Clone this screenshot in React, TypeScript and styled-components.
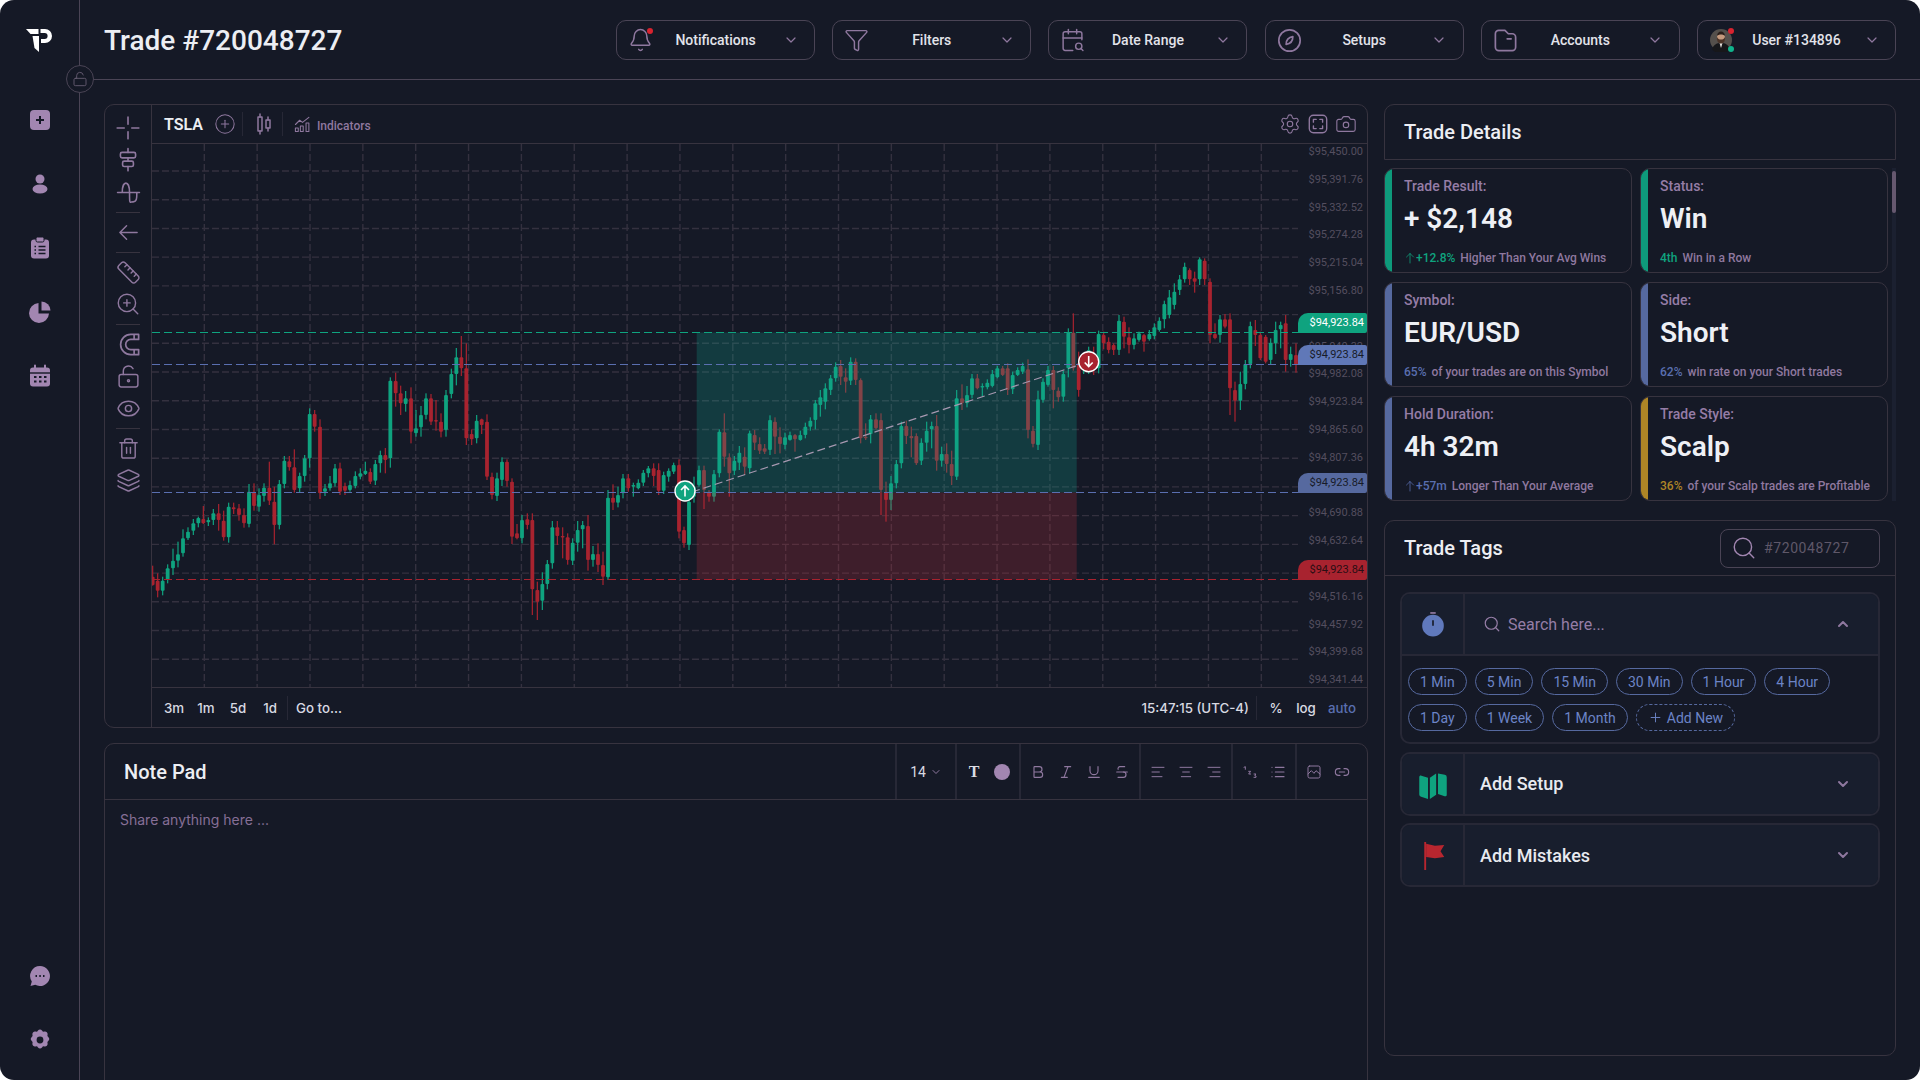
import React from 'react';
import styled, { createGlobalStyle } from 'styled-components';
import {
  Bell, Bold, Camera, CalendarSearch, ChevronDown, ChevronUp, CirclePlus, Eye, Funnel, Italic, Layers,
  Link2, List, LockKeyholeOpen, LockOpen, Plus, Ruler, Search, Settings, Strikethrough, Trash2, Underline, ZoomIn,
} from 'lucide-react';

const bg = '#151926';
const line = '#37333f';
const strong = '#4a4455';
const inner = '#272836';
const purple = '#8f789f';
const fillPurple = '#a286b1';
const green = '#0fa37f';
const blue = '#5a6fb0';
const red = '#a8232f';
const gold = '#ae8526';

const GlobalStyle = createGlobalStyle`
  html, body { margin: 0; padding: 0; background: #fff; }
  body { width: 1920px; height: 1080px; overflow: hidden; font-family: Roboto, "Liberation Sans", sans-serif; }
  * { box-sizing: border-box; }
`;

const Shell = styled.div`
  width: 1920px;
  height: 1080px;
  display: flex;
  background: ${bg};
  border-radius: 14px;
  overflow: hidden;
  color: #eceef3;
`;

const Sidebar = styled.aside`
  width: 80px;
  flex: none;
  display: flex;
  flex-direction: column;
  border-right: 1px solid ${strong};
  padding-bottom: 8px;
`;

const LogoCell = styled.div`
  height: 88px;
  display: flex;
  align-items: flex-start;
  justify-content: center;
  padding: 28px 2px 0 0;
`;

const NavItem = styled.div`
  height: 64px;
  display: flex;
  align-items: center;
  justify-content: center;
  color: ${fillPurple};
`;

const NavBottom = styled.div`
  margin-top: auto;
`;

const Content = styled.div`
  flex: 1;
  min-width: 0;
  display: flex;
  flex-direction: column;
`;

const Header = styled.header`
  position: relative;
  height: 80px;
  flex: none;
  display: flex;
  align-items: center;
  justify-content: space-between;
  padding: 1px 24px 0 24px;
  border-bottom: 1px solid ${strong};
`;

const LockBadge = styled.div`
  position: absolute;
  left: -14px;
  bottom: -14px;
  width: 28px;
  height: 28px;
  border-radius: 50%;
  background: ${bg};
  border: 1px solid ${strong};
  display: flex;
  align-items: center;
  justify-content: center;
  color: #6b6076;
`;

const Title = styled.h1`
  margin: 0;
  font-size: 28px;
  font-weight: 500;
  color: #eceef3;
`;

const Dropdowns = styled.div`
  display: flex;
  gap: 17.2px;
`;

const Dropdown = styled.div`
  width: 199px;
  height: 40px;
  border: 1px solid ${strong};
  border-radius: 10px;
  padding: 0 11px;
  display: grid;
  grid-template-columns: 25px 1fr 25px;
  align-items: center;
  font-size: 14px;
  font-weight: 500;
  color: #e2e3ea;
`;

const DropLabel = styled.span`
  text-align: center;
`;

const DropIcon = styled.span`
  position: relative;
  display: flex;
  justify-content: center;
  color: ${purple};
`;

const Dot = styled.i<{ $c: string; $top: number }>`
  position: absolute;
  right: 0;
  top: ${p => p.$top}px;
  width: 6px;
  height: 6px;
  border-radius: 50%;
  background: ${p => p.$c};
`;

const DropChevron = styled.span`
  display: flex;
  justify-content: center;
  color: ${purple};
`;

const Main = styled.main`
  flex: 1;
  min-height: 0;
  display: grid;
  grid-template-columns: 1264px 512px;
  gap: 16px;
  padding: 24px 24px 0;
  overflow: hidden;
`;

const LeftCol = styled.div`
  display: flex;
  flex-direction: column;
  gap: 15px;
`;

const ChartPanel = styled.section`
  height: 624px;
  flex: none;
  display: flex;
  border: 1px solid ${line};
  border-radius: 10px;
`;

const ToolRail = styled.div`
  width: 47px;
  flex: none;
  border-right: 1px solid ${line};
  padding-top: 7px;
  display: flex;
  flex-direction: column;
  align-items: center;
`;

const ToolIcon = styled.div`
  height: 32px;
  display: flex;
  align-items: center;
  color: ${purple};
`;

const ToolSep = styled.div`
  width: 24px;
  height: 1px;
  margin: 3.5px 0;
  background: ${line};
`;

const ChartCol = styled.div`
  flex: 1;
  min-width: 0;
  display: flex;
  flex-direction: column;
`;

const ChartTop = styled.div`
  height: 39px;
  flex: none;
  display: flex;
  align-items: center;
  padding: 0 10px 0 12px;
  border-bottom: 1px solid ${line};
  color: ${purple};
`;

const Symbol = styled.span`
  font-size: 16px;
  font-weight: 600;
  color: #eceef3;
  margin-right: 11px;
`;

const VSep = styled.span<{ $l?: number; $r?: number }>`
  width: 1px;
  height: 24px;
  background: ${inner};
  margin-left: ${p => p.$l ?? 8}px;
  margin-right: ${p => p.$r ?? 8}px;
`;

const Indicators = styled.span`
  font-size: 12px;
  font-weight: 500;
  margin: 3px 0 0 6px;
  color: ${purple};
`;

const TopRight = styled.div`
  margin-left: auto;
  display: flex;
  gap: 6px;
`;

const PlotRow = styled.div`
  flex: 1;
  min-height: 0;
  display: flex;
`;

const Plot = styled.svg`
  width: 1146px;
  height: 543px;
  flex: none;
  display: block;
`;

const Axis = styled.div`
  position: relative;
  flex: 1;
  display: flex;
  flex-direction: column;
  gap: 11.8px;
  overflow: hidden;
`;

const AxisLabel = styled.span`
  height: 16px;
  line-height: 16px;
  flex: none;
  text-align: right;
  padding-right: 4px;
  font-size: 11px;
  color: #544e5f;
`;

const PriceTag = styled.span<{ $top: number; $bg: string; $fg: string }>`
  position: absolute;
  left: 0;
  right: 0;
  top: ${p => p.$top}px;
  height: 20px;
  line-height: 20px;
  text-align: right;
  padding-right: 3px;
  font-size: 11px;
  background: ${p => p.$bg};
  color: ${p => p.$fg};
  border-radius: 10px 2px 2px 0;
`;

const ChartBottom = styled.div`
  height: 40px;
  flex: none;
  display: flex;
  align-items: center;
  padding: 1px 7px 0 6px;
  border-top: 1px solid ${line};
  font-family: Inter, Roboto, sans-serif;
  font-size: 13.3px;
  font-weight: 500;
  color: #d8d9e2;
`;

const RangeBtn = styled.span`
  width: 32px;
  text-align: center;
`;

const GoTo = styled.span`
  margin-left: 8px;
`;

const BarRight = styled.div`
  margin-left: auto;
  display: flex;
  align-items: center;
`;

const Scale = styled.span<{ $active?: boolean; $w: number }>`
  width: ${p => p.$w}px;
  text-align: center;
  color: ${p => (p.$active ? blue : '#d8d9e2')};
`;

const NotePanel = styled.section`
  height: 400px;
  flex: none;
  border: 1px solid ${line};
  border-radius: 10px;
`;

const NoteHead = styled.div`
  height: 56px;
  display: flex;
  align-items: stretch;
  border-bottom: 1px solid ${line};
  padding-right: 8px;
`;

const NoteTitle = styled.h2`
  margin: 0 auto 0 0;
  padding-left: 19px;
  align-self: center;
  font-size: 20px;
  font-weight: 500;
`;

const EdGroup = styled.div<{ $w?: number }>`
  ${p => (p.$w ? `width: ${p.$w}px; justify-content: center;` : '')}
  display: flex;
  align-items: center;
  gap: 12px;
  padding: 0 9px;
  border-left: 2px solid ${inner};
  color: ${purple};
  font-size: 14px;
`;

const SizeValue = styled.span`
  color: #d8d9e2;
  margin-right: -8px;
`;

const Swatch = styled.span`
  width: 16px;
  height: 16px;
  border-radius: 50%;
  background: ${fillPurple};
`;

const TextT = styled.span`
  width: 16px;
  text-align: center;
  font-family: "Liberation Serif", serif;
  font-weight: 700;
  font-size: 16px;
  color: #dcdde4;
`;

const Placeholder = styled.div`
  padding: 10px 15px;
  font-family: Inter, sans-serif;
  font-size: 14px;
  line-height: 20px;
  color: #866f96;
`;

const RightCol = styled.div`
  display: flex;
  flex-direction: column;
`;

const DetailsHead = styled.div`
  height: 56px;
  flex: none;
  display: flex;
  align-items: center;
  padding-left: 19px;
  border: 1px solid ${line};
  border-radius: 10px 10px 0 0;
  font-size: 20px;
  font-weight: 500;
`;

const CardsWrap = styled.div`
  margin-top: 8px;
  display: flex;
  gap: 4px;
`;

const CardGrid = styled.div`
  display: grid;
  grid-template-columns: 248px 248px;
  grid-auto-rows: 105px;
  gap: 9px 8px;
`;

const ScrollTrack = styled.div`
  width: 4px;
  background: #1b2030;
`;

const ScrollThumb = styled.div`
  width: 3.5px;
  height: 42px;
  margin-top: 3px;
  border-radius: 2px;
  background: #66586f;
`;

const Card = styled.div<{ $c: string }>`
  position: relative;
  overflow: hidden;
  border: 1px solid ${line};
  border-radius: 10px;
  padding: 8px 0 0 19px;

  &::before {
    content: '';
    position: absolute;
    left: 0;
    top: 0;
    bottom: 0;
    width: 7px;
    background: ${p => p.$c};
  }
`;

const CardLabel = styled.div`
  font-size: 14px;
  font-weight: 500;
  line-height: 18px;
  color: #957da6;
`;

const CardValue = styled.div`
  margin-top: 6px;
  font-size: 28px;
  font-weight: 600;
  line-height: 36px;
  color: #eef0f5;
`;

const CardSub = styled.div`
  margin-top: 13px;
  font-size: 12px;
  font-weight: 500;
  line-height: 16px;
  color: #8f789f;
  display: flex;
  align-items: center;
  gap: 5px;
  white-space: nowrap;
`;

const Delta = styled.span<{ $c: string }>`
  display: inline-flex;
  align-items: center;
  color: ${p => p.$c};
`;

const TagsPanel = styled.section`
  margin-top: 19px;
  height: 536px;
  flex: none;
  border: 1px solid ${line};
  border-radius: 10px;
`;

const TagsHead = styled.div`
  height: 55px;
  display: flex;
  align-items: center;
  justify-content: space-between;
  padding: 0 15px 0 19px;
  border-bottom: 1px solid ${line};
  font-size: 20px;
  font-weight: 500;
`;

const TagSearch = styled.div`
  width: 160px;
  height: 39px;
  border: 1px solid ${strong};
  border-radius: 8px;
  padding-left: 10px;
  display: flex;
  align-items: center;
  gap: 7px;
  color: ${fillPurple};
  font-size: 14px;
  font-weight: 400;
`;

const TagId = styled.span`
  color: #5f5869;
  letter-spacing: 0.6px;
`;

const TagsBody = styled.div`
  padding: 16px 15px;
  display: flex;
  flex-direction: column;
  gap: 7.5px;
`;

const Accordion = styled.div`
  border: 2px solid ${inner};
  border-radius: 10px;
  overflow: hidden;
`;

const AccHead = styled.div`
  height: 60px;
  display: flex;
  align-items: center;
  background: #181e2d;
`;

const AccIcon = styled.div`
  width: 63px;
  height: 100%;
  flex: none;
  display: flex;
  align-items: center;
  justify-content: center;
  border-right: 2px solid ${inner};
`;

const AccTitle = styled.span`
  margin-left: 15px;
  font-size: 18px;
  font-weight: 500;
  color: #e8eaf0;
`;

const AccSearch = styled.span`
  margin-left: 18px;
  display: flex;
  align-items: center;
  gap: 7px;
  font-size: 16px;
  color: #957da6;
`;

const AccChevron = styled.span`
  margin-left: auto;
  margin-right: 27px;
  display: flex;
  color: ${purple};
`;

const ChipWrap = styled.div`
  padding: 12px 6px 11px;
  display: flex;
  flex-wrap: wrap;
  gap: 9px 8px;
  border-top: 2px solid ${inner};
`;

const Chip = styled.span<{ $dashed?: boolean }>`
  height: 27px;
  padding: 0 11px;
  display: inline-flex;
  align-items: center;
  gap: 4px;
  font-size: 14px;
  color: #6c84c6;
  border: 1px ${p => (p.$dashed ? 'dashed' : 'solid')} #56699f;
  border-radius: 14px;
`;

const Icon = styled.svg.attrs({
  viewBox: '0 0 24 24',
  fill: 'none',
  stroke: 'currentColor',
  strokeWidth: 1.5,
  strokeLinecap: 'round',
  strokeLinejoin: 'round',
})<{ $s?: number }>`
  width: ${p => p.$s ?? 22}px;
  height: ${p => p.$s ?? 22}px;
  display: block;
  flex: none;
`;

const Solid = styled.svg.attrs({ viewBox: '0 0 24 24', fill: 'currentColor' })<{ $s?: number }>`
  width: ${p => p.$s ?? 24}px;
  height: ${p => p.$s ?? 24}px;
  display: block;
`;

const Logo = () => (
  <svg width="26" height="24" viewBox="0 0 26 24" fill="#fff">
    <path d="M0 1h12.5v5H4.5z" />
    <path d="M6.5 8H13v16l-4.500-4z" />
    <path d="M14.500 1H19a7 7 0 0 1 0 14h-4v-4h3.600a3 3 0 0 0 0-6h-4.100z" />
  </svg>
);

const Gear = () => (
  <Solid $s={24}>
    <path
      fillRule="evenodd"
      d="M10 2.500a2.600 2.600 0 0 1 4 0l1 1.200 1.600-.2a2.600 2.600 0 0 1 3 2.900l-.2 1.600 1.100 1.200a2.600 2.600 0 0 1 0 3.600l-1.100 1.200.2 1.600a2.600 2.600 0 0 1-3 2.900l-1.600-.2-1 1.200a2.600 2.600 0 0 1-4 0l-1-1.200-1.600.2a2.600 2.600 0 0 1-3-2.900l.2-1.600-1.100-1.200a2.600 2.600 0 0 1 0-3.600l1.100-1.200-.2-1.600a2.600 2.600 0 0 1 3-2.900l1.600.2zM12 8.600a3.400 3.400 0 1 0 0 6.800 3.400 3.400 0 0 0 0-6.800z"
    />
  </Solid>
);

const Avatar = () => (
  <svg width="24" height="24" viewBox="0 0 24 24">
    <circle cx="11" cy="12" r="11" fill="#55504c" />
    <path d="M2 21c2-5 5-6 9-6s7 1 9 6a11 11 0 0 1-18 0z" fill="#17171a" />
    <path d="M9.500 15l1.500 5 1.500-5z" fill="#e8e6e2" />
    <ellipse cx="11" cy="9.500" rx="4" ry="5" fill="#c69a7e" />
    <path d="M7 9c-.5 5 2 6.500 4 6.500s4.500-1.500 4-6.500c-1 2-2 2.500-4 2.500S8 11 7 9z" fill="#4a3328" />
    <path d="M7 8c0-3 2-4.500 4-4.500S15 5 15 8c-1.500-2-6.500-2-8 0z" fill="#2b1f1b" />
  </svg>
);

const A = `8 r 737 770 795 797;23 r 760 782 812 832;38 g 770 782 812 826;53 g 733 745 780 790;69 g 686 722 745 765;84 g 665 703 722 742;99 g 628 655 700 710;114 g 622 635 655 660;130 g 597 610 632 645;145 g 590 594 610 622;160 r 558 597 610 612;175 g 592 600 607 618;190 g 567 580 600 615;206 r 552 580 600 632;221 r 572 602 652 662;236 g 548 560 652 668;251 r 548 562 568 582;267 r 552 565 585 602;282 r 565 585 610 623;297 g 492 515 612 622;312 r 490 515 558 572;327 g 505 525 560 575;342 g 490 503 528 545;358 r 425 503 542 555;373 r 500 545 615 673;388 g 480 492 615 628;403 g 408 422 492 505;418 r 408 424 442 452;433 r 388 442 510 518;449 g 458 468 505 518;464 g 405 415 468 485;479 g 265 282 415 443;494 r 270 282 320 335;510 r 298 320 520 537;525 g 492 505 515 528;540 g 468 490 505 512;555 g 432 445 490 500;570 r 428 445 515 525;585 r 488 498 512 525;600 g 482 495 510 515;616 g 454 468 498 505;631 g 445 460 470 478;646 g 425 452 462 465;661 r 445 456 485 492;676 g 420 432 482 495;691 g 392 405 430 458;706 r 384 405 420 460;721 g 172 182 415 443;737 r 158 183 220 260;752 r 197 220 250 285;767 g 213 235 252 275;783 r 202 235 335 370;798 g 270 325 340 350;813 g 258 285 322 350;828 g 220 235 285 298;843 r 222 235 305 315;858 r 240 300 305 332;873 r 280 305 335 352;888 g 210 225 330 350;904 g 146 162 222 235;919 g 84 112 162 196;934 r 48 112 145 168;949 r 70 145 355 375;965 r 328 342 358 375;980 g 285 302 355 370;995 r 296 298 315 342;1011 r 283 305 470 480;1026 r 458 470 525 538;1041 g 458 475 528 543;1056 g 412 425 480 498;1071 r 418 425 483 500;1086 r 475 485 650 672;1101 r 612 640 655 658;1116 g 585 600 655 670;1132 r 580 598 615 628;1147 r 580 600 808 885;1162 r 785 810 845 900;1177 g 757 792 842 870;1192 g 720 732 792 808;1207 g 603 622 730 746;1222 r 603 622 648 675;1238 r 622 648 652 715;1253 r 640 652 720 734;1268 g 655 668 722 735;1283 g 603 630 668 695;1298 g 603 615 628 685;1314 r 585 618 720 752;1329 g 678 702 720 740;1344 r 670 702 735 756;1359 r 695 735 770 795;1374 g 510 533 772 780;1389 r 493 533 548 570;1404 g 500 525 548 562;1419 g 462 475 520 535;1435 r 462 475 505 515;1450 g 488 495 500 530;1465 g 478 488 505 508;1480 g 450 458 488 498;1495 g 438 445 460 472`;

const B = `41 r 490 505 528 558;56 r 490 510 572 585;71 g 515 525 572 582;86 g 505 512 530 545;101 g 488 495 515 522;117 r 478 495 695 715;132 r 680 690 730 743;147 g 590 605 735 750;162 g 530 560 590 608;177 g 497 510 555 560;192 r 497 510 570 627;207 r 570 575 590 605;222 g 510 522 590 605;238 g 388 395 520 532;253 r 340 397 470 500;268 r 460 472 520 590;283 g 468 482 512 525;298 g 438 458 488 510;314 r 442 470 500 525;329 g 392 400 505 520;344 r 390 405 428 450;359 r 412 432 452 462;374 r 432 445 455 462;390 g 346 360 450 465;405 r 352 365 410 462;420 r 382 410 432 460;435 g 398 412 435 448;450 g 395 405 420 422;465 r 402 405 418 455;481 g 392 405 420 422;496 g 368 380 405 415;511 g 352 362 380 392;526 g 300 310 360 388;541 g 270 292 315 350;556 g 250 265 305 328;572 g 225 235 270 285;587 g 187 200 235 245;602 r 180 198 230 255;617 r 205 232 245 278;632 g 172 185 242 255;647 r 175 185 240 255;662 r 235 240 415 430;677 r 370 410 415 420;692 g 345 358 402 430;708 r 340 358 385 388;723 r 340 360 570 645;738 r 545 575 600 665;753 g 528 550 600 630;769 g 480 492 550 565;784 g 365 378 490 505;799 r 362 378 408 432;814 r 380 408 415 472;829 r 400 408 490 495;844 g 415 428 482 495;860 g 365 392 428 455;875 g 365 378 388 445;890 r 345 378 482 512;905 g 440 462 482 500;920 r 430 462 492 518;935 r 452 492 528 555;950 g 270 295 530 540;966 r 253 295 310 330;981 g 258 285 310 322;996 g 222 235 285 295;1012 r 222 235 265 268;1027 g 250 258 262 290;1042 g 238 248 262 268;1057 g 210 222 258 262;1072 g 198 205 232 235;1088 r 198 205 225 228;1103 r 190 205 270 285;1118 g 215 225 268 282;1133 g 202 210 225 228;1148 g 188 198 215 222;1164 r 178 208 390 415;1179 r 378 392 432 442;1194 g 272 298 435 450;1209 g 235 245 300 308;1224 g 198 210 255 260;1240 r 198 210 270 325;1255 r 262 272 292 305;1270 g 212 222 290 305;1285 g 85 98 205 232;1300 r 40 98 205 212;1316 r 155 190 270 290;1331 g 195 200 205 222;1346 g 140 150 205 222;1361 r 140 195 205 225;1376 g 92 102 205 220;1391 r 95 105 130 148;1406 r 112 125 150 160;1421 r 130 135 150 165;1437 g 45 62 150 165;1452 r 50 65 110 145;1467 r 82 112 135 160;1482 g 100 115 135 148;1497 g 95 100 120 125`;

const C = `132 r 282 285 305 335;148 g 270 282 298 302;163 g 250 262 288 298;178 g 232 242 270 275;193 g 182 192 238 265;208 g 150 172 225 235;223 g 130 155 195 208;239 g 105 118 150 165;254 g 68 80 118 128;269 r 85 90 118 135;284 r 95 115 125 158;299 g 52 58 118 135;314 r 55 62 118 135;330 r 115 125 285 310;345 r 250 282 295 298;360 g 225 238 285 308;375 r 222 238 260 265;390 r 220 238 445 525;405 r 425 450 482 545;421 g 395 432 482 510;436 g 360 372 432 448;451 g 245 258 372 385;466 r 240 270 285 318;481 r 275 285 355 360;497 r 285 290 365 370;512 g 295 308 360 372;527 g 245 270 310 342;542 g 245 255 268 325;557 r 225 250 360 395;572 g 320 342 360 380;588 r 310 345 375 398`;

const parseCandles = (src: string, ox: number, oy: number) =>
  src.split(';').map(row => {
    const [x, side, hi, top, bot, lo] = row.split(' ');
    return {
      x: ox + Number(x) / 3,
      up: side === 'g',
      hi: oy + Number(hi) / 3,
      top: oy + Number(top) / 3,
      bot: oy + Number(bot) / 3,
      lo: oy + Number(lo) / 3,
    };
  });

const candles = [...parseCandles(A, 150, 320), ...parseCandles(B, 640, 300), ...parseCandles(C, 1100, 240)];

const gridY = Array.from({ length: 19 }, (_, i) => 171 + i * 28.72);
const gridX = Array.from({ length: 21 }, (_, i) => 204.3 + i * 52.85);

const Chart = () => (
  <Plot viewBox="152 144 1146 543">
    {gridY.map(y => (
      <line key={y} x1={152} x2={1298} y1={y} y2={y} stroke="#34313f" strokeWidth={1.4} strokeDasharray="7 3" />
    ))}
    {gridX.map(x => (
      <line key={x} x1={x} x2={x} y1={144} y2={687} stroke="#34313f" strokeWidth={1.4} strokeDasharray="7 3" />
    ))}
    {candles.map(c => (
      <g key={c.x} fill={c.up ? green : red}>
        <rect x={c.x - 0.6} y={c.hi} width={1.2} height={c.lo - c.hi} />
        <rect x={c.x - 1.9} y={c.top} width={3.8} height={Math.max(c.bot - c.top, 1.5)} rx={1} />
      </g>
    ))}
    <rect x={696.7} y={332.5} width={380} height={160} fill="rgba(17,165,142,.25)" />
    <rect x={696.7} y={492.5} width={380} height={87} fill="rgba(189,49,58,.25)" />
    <line x1={152} x2={1298} y1={332.5} y2={332.5} stroke={green} strokeDasharray="8 4" />
    <line x1={152} x2={1298} y1={364.5} y2={364.5} stroke={blue} strokeDasharray="8 4" />
    <line x1={152} x2={1298} y1={492.5} y2={492.5} stroke={blue} strokeDasharray="8 4" />
    <line x1={152} x2={1298} y1={579.5} y2={579.5} stroke={red} strokeDasharray="8 4" />
    <line x1={692} x2={1082} y1={492} y2={364} stroke="#a798b0" strokeWidth={1.2} strokeDasharray="8 4" />
    <circle cx={685} cy={491} r={10} fill={green} stroke="#fff" strokeWidth={1.4} />
    <path d="M685 496.500v-10M681 490l4-4 4 4" fill="none" stroke="#fff" strokeWidth={1.6} />
    <circle cx={1088.7} cy={361.7} r={10} fill={red} stroke="#fff" strokeWidth={1.4} />
    <path d="M1088.700 356v10.500M1084.700 362.500l4 4 4-4" fill="none" stroke="#fff" strokeWidth={1.6} />
  </Plot>
);

// rows covered by a price tag are left blank
const prices = [
  '95,450.00', '95,391.76', '95,332.52', '95,274.28', '95,215.04', '95,156.80', '', '95,040.32', '94,982.08',
  '94,923.84', '94,865.60', '94,807.36', '', '94,690.88', '94,632.64', '', '94,516.16', '94,457.92',
  '94,399.68', '94,341.44',
];

const dropdowns: { label: string; icon: React.ReactNode }[] = [
  { label: 'Notifications', icon: <><Bell size={26} strokeWidth={1.4} /><Dot $c="#d8232f" $top={1} /></> },
  { label: 'Filters', icon: <Funnel size={26} strokeWidth={1.4} /> },
  { label: 'Date Range', icon: <CalendarSearch size={26} strokeWidth={1.4} /> },
  {
    label: 'Setups',
    icon: (
      <Icon $s={27} strokeWidth={1.3}>
        <circle cx="12" cy="12" r="9.500" />
        <path d="M9 15.500c0-4.500 2-6.500 6-7 0 4.500-2 6.500-6 7z" />
      </Icon>
    ),
  },
  {
    label: 'Accounts',
    icon: (
      <Icon $s={27} strokeWidth={1.3}>
        <path d="M3 6a3 3 0 0 1 3-3h5.500l3 3H18a3 3 0 0 1 3 3v9a3 3 0 0 1-3 3H6a3 3 0 0 1-3-3z" />
        <path d="M13.500 10.500h3.500" />
      </Icon>
    ),
  },
  { label: 'User #134896', icon: <><Avatar /><Dot $c="#d8232f" $top={0} /><Dot $c="#10b48d" $top={18} /></> },
];

const statCards = [
  { label: 'Trade Result:', value: '+ $2,148', delta: '+12.8%', arrow: true, text: 'Higher Than Your Avg Wins', c: green, bar: '#0e9a7b' },
  { label: 'Status:', value: 'Win', delta: '4th', text: 'Win in a Row', c: green, bar: '#0e9a7b' },
  { label: 'Symbol:', value: 'EUR/USD', delta: '65%', text: 'of your trades are on this Symbol', c: blue, bar: '#56699f' },
  { label: 'Side:', value: 'Short', delta: '62%', text: 'win rate on your Short trades', c: blue, bar: '#56699f' },
  { label: 'Hold Duration:', value: '4h 32m', delta: '+57m', arrow: true, text: 'Longer Than Your Average', c: blue, bar: '#56699f' },
  { label: 'Trade Style:', value: 'Scalp', delta: '36%', text: 'of your Scalp trades are Profitable', c: gold, bar: gold },
];

const chips = ['1 Min', '5 Min', '15 Min', '30 Min', '1 Hour', '4 Hour', '1 Day', '1 Week', '1 Month'];

const AlignIcon = ({ lines }: { lines: string }) => (
  <Icon $s={16} strokeWidth={2}>
    <path d={lines} />
  </Icon>
);

const App: React.FC = () => (
  <>
    <GlobalStyle />
    <Shell>
      <Sidebar>
        <LogoCell><Logo /></LogoCell>
        <NavItem>
          <Solid $s={24}>
            <rect x="2" y="2" width="20" height="20" rx="4" />
            <path d="M12 8v8M8 12h8" stroke={bg} strokeWidth="2" />
          </Solid>
        </NavItem>
        <NavItem>
          <Solid $s={24}>
            <circle cx="12" cy="7" r="4.500" />
            <ellipse cx="12" cy="17" rx="7.500" ry="4.500" />
          </Solid>
        </NavItem>
        <NavItem>
          <Solid $s={24}>
            <rect x="3" y="3.500" width="18" height="19" rx="3" />
            <rect x="8" y="1" width="8" height="5" rx="1.500" stroke={bg} />
            <path d="M10.500 10.500h7M10.500 14h7M10.500 17.500h7M6.500 10.500h1.500M6.500 14h1.500M6.500 17.500h1.500" stroke={bg} strokeWidth="1.400" />
          </Solid>
        </NavItem>
        <NavItem>
          <Solid $s={24}>
            <path d="M10.500 3a10 10 0 1 0 10.500 10.500H10.500z" />
            <path d="M13.500 1.500a9 9 0 0 1 9 9h-9z" />
          </Solid>
        </NavItem>
        <NavItem>
          <Solid $s={24}>
            <rect x="2" y="3.500" width="20" height="19" rx="3" />
            <path d="M7 1.500v4M17 1.500v4" stroke={fillPurple} strokeWidth="2" strokeLinecap="round" />
            <path d="M2 9h20" stroke={bg} strokeWidth="1.400" />
            <path d="M6 13h2.500M11 13h2.500M16 13h2.500M6 17.500h2.500M11 17.500h2.500M16 17.500h2.500" stroke={bg} strokeWidth="2" />
          </Solid>
        </NavItem>
        <NavBottom>
          <NavItem>
            <Solid $s={24}>
              <path d="M12 2a10 10 0 1 1-4.800 18.800L2.500 22l1.300-4.500A10 10 0 0 1 12 2z" />
              <path d="M7.500 12h1.500M11.300 12h1.500M15 12h1.500" stroke={bg} strokeWidth="1.800" />
            </Solid>
          </NavItem>
          <NavItem><Gear /></NavItem>
        </NavBottom>
      </Sidebar>

      <Content>
        <Header>
          <LockBadge><LockOpen size={16} strokeWidth={1.3} /></LockBadge>
          <Title>Trade #720048727</Title>
          <Dropdowns>
            {dropdowns.map(d => (
              <Dropdown key={d.label}>
                <DropIcon>{d.icon}</DropIcon>
                <DropLabel>{d.label}</DropLabel>
                <DropChevron><ChevronDown size={16} strokeWidth={1.8} /></DropChevron>
              </Dropdown>
            ))}
          </Dropdowns>
        </Header>

        <Main>
          <LeftCol>
            <ChartPanel>
              <ToolRail>
                <ToolIcon><Icon $s={26} strokeWidth={1.3}><path d="M12 2v6.500M12 15.500V22M2 12h6.500M15.500 12H22" /></Icon></ToolIcon>
                <ToolIcon>
                  <Icon $s={26} strokeWidth={1.3}>
                    <path d="M12 1.500V5M12 10v3M12 18v4" />
                    <rect x="5" y="5" width="14" height="5" rx="1.500" />
                    <rect x="7" y="13" width="10" height="5" rx="1.500" />
                  </Icon>
                </ToolIcon>
                <ToolIcon><Icon $s={25} strokeWidth={1.4}><path d="M1.500 12h21M6 12c0-12 7-12 7 0s0 9 3.500 9S20 17 20 12" /></Icon></ToolIcon>
                <ToolSep />
                <ToolIcon><Icon $s={23}><path d="M21 12H3M10 5l-7 7 7 7" /></Icon></ToolIcon>
                <ToolSep />
                <ToolIcon><Ruler size={25} strokeWidth={1.4} /></ToolIcon>
                <ToolIcon><ZoomIn size={26} strokeWidth={1.3} /></ToolIcon>
                <ToolSep />
                <ToolIcon>
                  <Icon $s={27} strokeWidth={1.3}>
                    <path d="M21 3h-7a9 9 0 0 0 0 18h7v-4.500h-7a4.500 4.500 0 0 1 0-9h7zM17 3v4.500M17 16.500V21" />
                  </Icon>
                </ToolIcon>
                <ToolIcon><LockKeyholeOpen size={25} strokeWidth={1.4} /></ToolIcon>
                <ToolIcon><Eye size={25} strokeWidth={1.4} /></ToolIcon>
                <ToolSep />
                <ToolIcon><Trash2 size={23} strokeWidth={1.5} /></ToolIcon>
                <ToolIcon><Layers size={25} strokeWidth={1.4} /></ToolIcon>
              </ToolRail>
              <ChartCol>
                <ChartTop>
                  <Symbol>TSLA</Symbol>
                  <CirclePlus size={22} strokeWidth={1.1} />
                  <VSep $l={6} $r={9} />
                  <Icon $s={24} strokeWidth={1.2}>
                    <rect x="6" y="5" width="4" height="14" />
                    <path d="M8 2v3M8 19v3M16 5v3M16 16v3" />
                    <rect x="14" y="8" width="4" height="8" />
                  </Icon>
                  <VSep $l={6} $r={11} />
                  <Icon $s={17}>
                    <path d="M2 12l6-6 4 3 9-7" />
                    <rect x="2" y="17" width="4" height="5" />
                    <rect x="9" y="14" width="4" height="8" />
                    <rect x="17" y="10" width="4" height="12" />
                  </Icon>
                  <Indicators>Indicators</Indicators>
                  <TopRight>
                    <Settings size={22} strokeWidth={1.2} />
                    <Icon $s={22} strokeWidth={1.2}>
                      <rect x="2.500" y="2.500" width="19" height="19" rx="4.500" />
                      <path d="M7 10V7h3M14 7h3v3M17 14v3h-3M10 17H7v-3" />
                    </Icon>
                    <Camera size={22} strokeWidth={1.2} />
                  </TopRight>
                </ChartTop>
                <PlotRow>
                  <Chart />
                  <Axis>
                    {prices.map((p, i) => <AxisLabel key={i}>{p && `$${p}`}</AxisLabel>)}
                    <PriceTag $top={169} $bg={green} $fg="#fff">$94,923.84</PriceTag>
                    <PriceTag $top={201} $bg="#6078b8" $fg="#171b28">$94,923.84</PriceTag>
                    <PriceTag $top={329} $bg="#56699f" $fg="#171b28">$94,923.84</PriceTag>
                    <PriceTag $top={416} $bg={red} $fg="#2a0e14">$94,923.84</PriceTag>
                  </Axis>
                </PlotRow>
                <ChartBottom>
                  <RangeBtn>3m</RangeBtn>
                  <RangeBtn>1m</RangeBtn>
                  <RangeBtn>5d</RangeBtn>
                  <RangeBtn>1d</RangeBtn>
                  <VSep $l={1} $r={0} />
                  <GoTo>Go to...</GoTo>
                  <BarRight>
                    <span>15:47:15 (UTC-4)</span>
                    <VSep $l={7} $r={7} />
                    <Scale $w={24}>%</Scale>
                    <Scale $w={36}>log</Scale>
                    <Scale $active $w={36}>auto</Scale>
                  </BarRight>
                </ChartBottom>
              </ChartCol>
            </ChartPanel>

            <NotePanel>
              <NoteHead>
                <NoteTitle>Note Pad</NoteTitle>
                <EdGroup $w={60}>
                  <SizeValue>14</SizeValue>
                  <ChevronDown size={12} strokeWidth={2} />
                </EdGroup>
                <EdGroup><TextT>T</TextT><Swatch /></EdGroup>
                <EdGroup>
                  <Bold size={16} strokeWidth={1.7} />
                  <Italic size={16} strokeWidth={1.7} />
                  <Underline size={16} strokeWidth={1.7} />
                  <Strikethrough size={16} strokeWidth={1.7} />
                </EdGroup>
                <EdGroup>
                  <AlignIcon lines="M3 5h18M3 12h11M3 19h15" />
                  <AlignIcon lines="M3 5h18M7 12h10M5 19h14" />
                  <AlignIcon lines="M3 5h18M10 12h11M6 19h15" />
                </EdGroup>
                <EdGroup>
                  <AlignIcon lines="M3 5l2-1v4M10 11h3l-3 4h3M18 15h3l-2 2 2 1v2h-3" />
                  <List size={16} strokeWidth={1.7} />
                </EdGroup>
                <EdGroup>
                  <Icon $s={16} strokeWidth={1.8}>
                    <rect x="3" y="3" width="18" height="18" rx="2.500" />
                    <path d="M3 15l5-5 4 4 3-4 6 5" />
                  </Icon>
                  <Link2 size={16} strokeWidth={1.7} />
                </EdGroup>
              </NoteHead>
              <Placeholder>Share anything here ...</Placeholder>
            </NotePanel>
          </LeftCol>

          <RightCol>
            <DetailsHead>Trade Details</DetailsHead>
            <CardsWrap>
              <CardGrid>
                {statCards.map(s => (
                  <Card key={s.label} $c={s.bar}>
                    <CardLabel>{s.label}</CardLabel>
                    <CardValue>{s.value}</CardValue>
                    <CardSub>
                      <Delta $c={s.c}>
                        {s.arrow && (
                          <Icon $s={12} strokeWidth={2}><path d="M12 22V3M5 10l7-7 7 7" /></Icon>
                        )}
                        {s.delta}
                      </Delta>
                      {s.text}
                    </CardSub>
                  </Card>
                ))}
              </CardGrid>
              <ScrollTrack><ScrollThumb /></ScrollTrack>
            </CardsWrap>

            <TagsPanel>
              <TagsHead>
                Trade Tags
                <TagSearch>
                  <Search size={26} strokeWidth={1.3} />
                  <TagId>#720048727</TagId>
                </TagSearch>
              </TagsHead>
              <TagsBody>
                <Accordion>
                  <AccHead>
                    <AccIcon>
                      <Solid $s={26}>
                        <rect x="9.500" y="1" width="5" height="1.600" fill={purple} />
                        <circle cx="12" cy="13.500" r="10" fill="#6079bc" />
                        <path d="M12 8.500v5" stroke={bg} strokeWidth="1.500" />
                      </Solid>
                    </AccIcon>
                    <AccSearch>
                      <Search size={18} strokeWidth={1.6} />
                      Search here...
                    </AccSearch>
                    <AccChevron><ChevronUp size={16} strokeWidth={3} /></AccChevron>
                  </AccHead>
                  <ChipWrap>
                    {chips.map(c => <Chip key={c}>{c}</Chip>)}
                    <Chip $dashed><Plus size={15} strokeWidth={1.5} />Add New</Chip>
                  </ChipWrap>
                </Accordion>
                <Accordion>
                  <AccHead>
                    <AccIcon>
                      <Solid $s={30}>
                        <path d="M1 6.500c0-1 .8-1.500 1.700-1.200L8 7v17l-5.500-1.800A2 2 0 0 1 1 20.300z" fill={green} />
                        <path d="M9.500 7l5-3.500v17l-5 3.500z" fill={green} />
                        <path d="M16 3.500l5.500 1a2 2 0 0 1 1.500 2v14c0 1-.8 1.500-1.700 1.200L16 20z" fill={green} />
                      </Solid>
                    </AccIcon>
                    <AccTitle>Add Setup</AccTitle>
                    <AccChevron><ChevronDown size={16} strokeWidth={3} /></AccChevron>
                  </AccHead>
                </Accordion>
                <Accordion>
                  <AccHead>
                    <AccIcon>
                      <Solid $s={30}>
                        <path d="M5 1.500h1.500V26H5z" fill="#b8262f" />
                        <path d="M6.500 3l7 1.500L21 4l-3 5 3 4.500-7.500 1-7-1z" fill="#b8262f" />
                      </Solid>
                    </AccIcon>
                    <AccTitle>Add Mistakes</AccTitle>
                    <AccChevron><ChevronDown size={16} strokeWidth={3} /></AccChevron>
                  </AccHead>
                </Accordion>
              </TagsBody>
            </TagsPanel>
          </RightCol>
        </Main>
      </Content>
    </Shell>
  </>
);

export default App;
